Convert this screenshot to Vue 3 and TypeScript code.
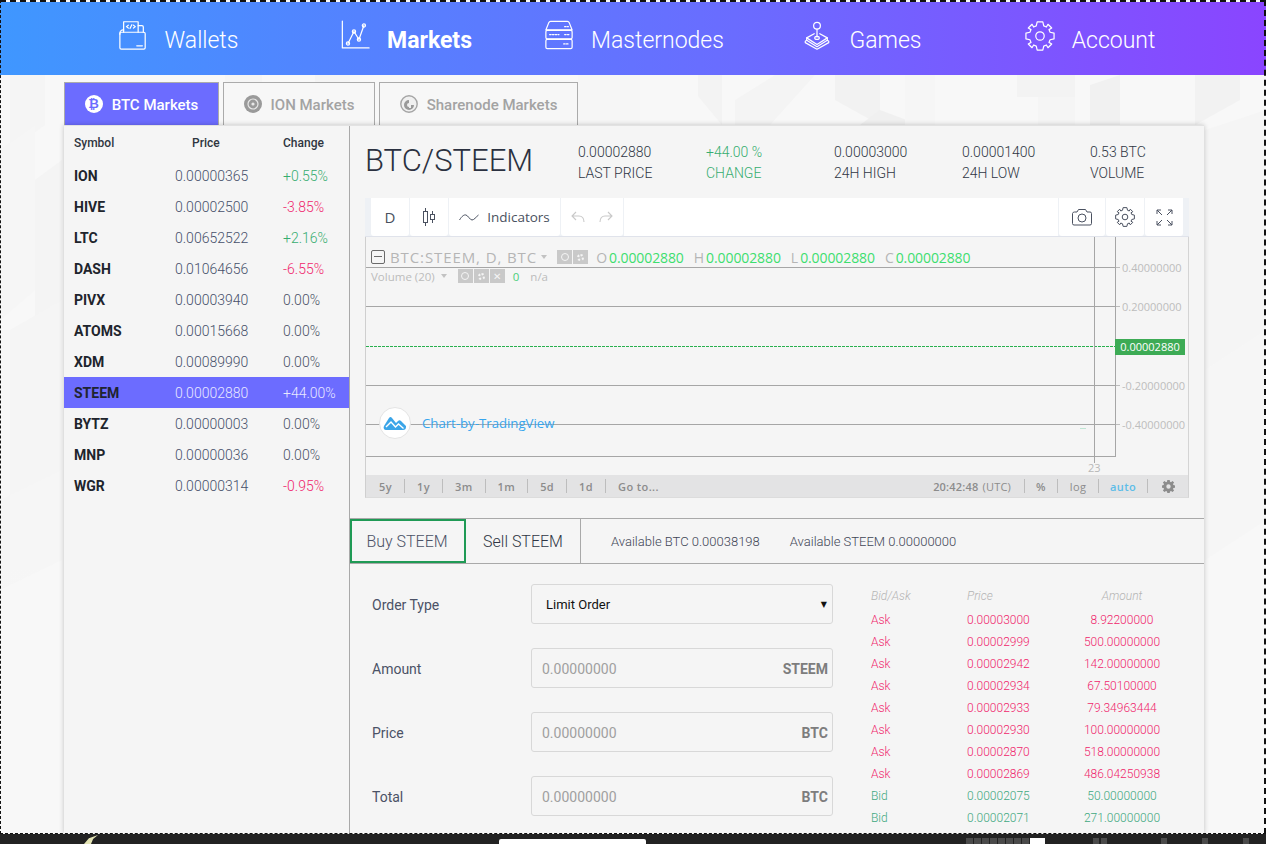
<template>
  <div class="page">
    <svg class="bg-pattern" width="1266" height="844" viewBox="0 0 1266 844">
      <polygon v-for="(p, i) in bgShapes" :key="i" :points="p.points" :fill="p.fill" />
      <rect x="0" y="560" width="1266" height="284" fill="url(#fade)" />
      <defs>
        <linearGradient id="fade" x1="0" y1="0" x2="0" y2="1">
          <stop offset="0" stop-color="#f8f8f8" stop-opacity="0" />
          <stop offset="0.65" stop-color="#f8f8f8" stop-opacity="1" />
        </linearGradient>
      </defs>
    </svg>

    <!-- top navigation -->
    <nav class="topnav">
      <div class="nav-inner">
        <a v-for="item in navItems" :key="item.label" class="nav-item" :class="{ active: item.active }">
          <svg class="nav-icon" viewBox="0 0 32 32" fill="none" stroke="#fff" stroke-width="1.3" stroke-linejoin="round" stroke-linecap="round">
            <g v-if="item.icon === 'wallet'">
              <path d="M6 12V.8h15.5V12" />
              <path d="M21.5 5h4a1.5 1.5 0 0 1 1.5 1.5V12" />
              <path d="M2 14v-1a3.5 3.5 0 0 1 3.5-3.5H6" />
              <path d="M11 4.5L9 6l2 1.5M16.5 4.5L18.5 6l-2 1.5M12.8 8l2-4" />
              <rect x="2" y="12" width="27" height="18" rx="1.5" />
              <path d="M20 26.5h6" />
            </g>
            <g v-else-if="item.icon === 'chart'">
              <path d="M2.5 0v28.7H31" />
              <path d="M8.5 24l6.4-12.8 5.3 8.5 5.3-14.9" />
              <circle cx="8.5" cy="24" r="1.7" />
              <circle cx="14.9" cy="11.2" r="1.7" />
              <circle cx="20.2" cy="19.7" r="1.7" />
              <circle cx="25.5" cy="4.8" r="1.7" />
            </g>
            <g v-else-if="item.icon === 'server'">
              <path d="M7 .5h18c1 0 1.5.5 2 1.5l3 7.5H2l3-7.5c.5-1 1-1.5 2-1.500z" />
              <rect x="2" y="10" width="28" height="9" rx="1.5" />
              <rect x="2" y="19.5" width="28" height="10" rx="1.5" />
              <path d="M6 14.5h10M22 14.5h5M21 24.5h6M22 6h4" stroke-dasharray="1.6 1.4" />
            </g>
            <g v-else-if="item.icon === 'joystick'">
              <circle cx="16" cy="5" r="3.6" />
              <path d="M16 8.6V17" />
              <ellipse cx="16" cy="18" rx="2.4" ry="1.6" />
              <path d="M13 13.5L5 18l11 7 11-7-8-4.5" />
              <path d="M5 18v2.5l11 7 11-7V18" />
              <path d="M5 20.5l-1.5 1v1.6l12.5 7 12.5-7v-1.6l-1.5-1" />
            </g>
            <g v-else>
              <circle cx="16" cy="16" r="4.5" />
              <path d="M13 1H19L20 5.2 22.8 6.4 24.5 3.5 28.5 7.5 25.6 9.2 26.8 12 31 13V19L26.8 20 25.6 22.8 28.5 24.5 24.5 28.5 22.8 25.6 20 26.8 19 31H13L12 26.8 9.2 25.6 7.5 28.5 3.5 24.5 6.4 22.8 5.2 20 1 19V13L5.2 12 6.4 9.2 3.5 7.5 7.5 3.5 9.2 6.4 12 5.2z" />
            </g>
          </svg>
          <span class="nav-label">{{ item.label }}</span>
        </a>
      </div>
    </nav>

    <main class="wrap">
      <!-- market tabs -->
      <div class="market-tabs">
        <button class="market-tab active">
          <span class="coin coin-btc">₿</span>
          <span class="tab-label">BTC Markets</span>
        </button>
        <button class="market-tab">
          <svg class="coin-svg" viewBox="0 0 18 18">
            <circle cx="9" cy="9" r="9" fill="#9a9a9a" />
            <circle cx="9" cy="9" r="5" fill="none" stroke="#e8e8e8" stroke-width="1.2" />
            <circle cx="9" cy="9" r="1.6" fill="#e8e8e8" />
          </svg>
          <span class="tab-label">ION Markets</span>
        </button>
        <button class="market-tab">
          <svg class="coin-svg" viewBox="0 0 18 18">
            <circle cx="9" cy="9" r="8.2" fill="#f0f0f0" stroke="#a5a5a5" stroke-width="1.4" />
            <path d="M9 5a5 5 0 1 0 5 5h-3a2 2 0 1 1-2-2z" fill="#9a9a9a" />
            <path d="M9 9v4h2v-4z" fill="#f0f0f0" />
          </svg>
          <span class="tab-label">Sharenode Markets</span>
        </button>
      </div>

      <div class="panel">
        <!-- market list -->
        <aside class="market-list">
          <div class="list-head">
            <span>Symbol</span>
            <span class="head-price">Price</span>
            <span>Change</span>
          </div>
          <div v-for="m in markets" :key="m.symbol" class="list-row" :class="{ selected: m.symbol === 'STEEM' }">
            <span class="sym">{{ m.symbol }}</span>
            <span class="price">{{ m.price }}</span>
            <span :class="changeClass(m.change)">{{ m.change }}</span>
          </div>
        </aside>

        <section class="detail">
          <header class="pair-head">
            <h1 class="pair">BTC/STEEM</h1>
            <div class="stats">
              <div v-for="s in stats" :key="s.label" class="stat" :class="{ up: s.up }">
                <div>{{ s.value }}</div>
                <div>{{ s.label }}</div>
              </div>
            </div>
          </header>

          <!-- chart widget -->
          <div class="chart">
            <div class="tv-toolbar">
              <div class="tv-cell tv-d">D</div>
              <div class="tv-cell tv-candle">
                <svg width="16" height="20" viewBox="0 0 16 20" fill="none" stroke="#4a5160">
                  <path d="M4.5 1v18M11.5 4v12" />
                  <rect x="2.5" y="4.5" width="4" height="11" fill="#fff" />
                  <rect x="9.5" y="7.5" width="4" height="5" fill="#fff" />
                </svg>
              </div>
              <div class="tv-cell tv-ind">
                <svg width="20" height="10" viewBox="0 0 20 10" fill="none" stroke="#4a5160">
                  <path d="M.5 8C3 4 5 2.5 7 3s4 5 6 5 4-3 6.5-5" />
                </svg>
                Indicators
              </div>
              <div class="tv-cell tv-undo">
                <svg width="14" height="12" viewBox="0 0 14 12" fill="none" stroke="#c9c9c9" stroke-width="1.1">
                  <path d="M5 1L1 5l4 4M1 5h7c3 0 5 2 5 6" />
                </svg>
                <svg width="14" height="12" viewBox="0 0 14 12" fill="none" stroke="#c9c9c9" stroke-width="1.1">
                  <path d="M9 1l4 4-4 4M13 5H6c-3 0-5 2-5 6" />
                </svg>
              </div>
              <div class="tv-fill"></div>
              <div class="tv-cell tv-cam">
                <svg width="22" height="18" viewBox="0 0 22 18" fill="none" stroke="#4a5160">
                  <path d="M1.5 5.5a2 2 0 0 1 2-1.5H6l1.5-2.5h7L16 4h3a1.5 1.5 0 0 1 1.5 1.5v10a1.5 1.5 0 0 1-1.5 1.5H3a1.5 1.5 0 0 1-1.5-1.5z" />
                  <circle cx="11" cy="10" r="4" />
                </svg>
              </div>
              <div class="tv-cell tv-gear">
                <svg width="20" height="20" viewBox="0 0 32 32" fill="none" stroke="#4a5160" stroke-width="1.6" stroke-linejoin="round">
                  <circle cx="16" cy="16" r="4.5" />
                  <path d="M13 1H19L20 5.2 22.8 6.4 24.5 3.5 28.5 7.5 25.6 9.2 26.8 12 31 13V19L26.8 20 25.6 22.8 28.5 24.5 24.5 28.5 22.8 25.6 20 26.8 19 31H13L12 26.8 9.2 25.6 7.5 28.5 3.5 24.5 6.4 22.8 5.2 20 1 19V13L5.2 12 6.4 9.2 3.5 7.5 7.5 3.5 9.2 6.4 12 5.2z" />
                </svg>
              </div>
              <div class="tv-cell tv-full">
                <svg width="17" height="17" viewBox="0 0 17 17" fill="none" stroke="#4a5160">
                  <path d="M1 5V1h4M1 1l5 5M12 1h4v4M16 1l-5 5M1 12v4h4M1 16l5-5M16 12v4h-4M16 16l-5-5" />
                </svg>
              </div>
            </div>

            <div class="tv-canvas">
              <svg class="tv-lines" width="823" height="239" viewBox="0 0 823 239">
                <path d="M1 31.5h749M1 70.5h749M1 149.5h749M1 188.5h749M1 220.5h749" stroke="#a6a6a6" fill="none" />
                <path d="M1 110.5h749" stroke="#28b04e" stroke-dasharray="3 1" fill="none" />
                <path d="M729.5 1v226M750.5 1v220" stroke="#a6a6a6" fill="none" />
                <path d="M751 31.5h4M751 70.5h4M751 110.5h4M751 149.5h4M751 188.5h4" stroke="#bdbdbd" fill="none" />
                <path d="M715 192.5h6" stroke="#bfe5d3" fill="none" />
              </svg>

              <div class="legend legend-main">
                <span class="collapse-box"></span>
                <span class="legend-title">BTC:STEEM, D, BTC</span>
                <span class="caret"></span>
                <span class="legend-btns">
                  <span class="legend-btn"><i class="eye"></i></span>
                  <span class="legend-btn"><i class="cog"></i></span>
                </span>
                <span class="ohlc first"><b>O</b><em>0.00002880</em></span>
                <span class="ohlc"><b>H</b><em>0.00002880</em></span>
                <span class="ohlc"><b>L</b><em>0.00002880</em></span>
                <span class="ohlc"><b>C</b><em>0.00002880</em></span>
              </div>
              <div class="legend legend-vol">
                <span>Volume (20)</span>
                <span class="caret small"></span>
                <span class="legend-btns">
                  <span class="legend-btn sm"><i class="eye"></i></span>
                  <span class="legend-btn sm"><i class="cog"></i></span>
                  <span class="legend-btn sm close">✕</span>
                </span>
                <span class="vol-zero">0</span>
                <span>n/a</span>
              </div>

              <span v-for="t in axisTicks" :key="t.text" class="axis-tick" :style="{ top: t.top + 'px' }">{{ t.text }}</span>
              <span class="price-tag">0.00002880</span>
              <span class="date-tick">23</span>

              <div class="tv-logo">
                <span class="tv-logo-circle">
                  <svg width="24" height="15" viewBox="0 0 24 15">
                    <path d="M1 10l5-8c1-1.3 2-1.3 3 0l4 5 2-2c1-1 2-1 3 0l5 5v1c0 2-1 3-3 3H3c-2 0-3-2-2-4z" fill="#3ba5e8" />
                    <path d="M3 11l5-5 4.5 5 3-3 5 4.5" fill="none" stroke="#fff" stroke-width="1.4" />
                  </svg>
                </span>
                <span class="tv-logo-text">Chart-by-TradingView</span>
              </div>
            </div>

            <div class="tv-timebar">
              <span v-for="r in ranges" :key="r" class="tb-item">{{ r }}</span>
              <span class="tb-item tb-last">Go to...</span>
              <span class="tb-fill"></span>
              <span class="tb-item tb-clock">20:42:48 <small>(UTC)</small></span>
              <span class="tb-item tb-pct">%</span>
              <span class="tb-item tb-log">log</span>
              <span class="tb-item tb-auto">auto</span>
              <span class="tb-gear">
                <svg width="13" height="13" viewBox="0 0 13 13">
                  <path fill="#8c8c8c" fill-rule="evenodd" d="M5.3 0h2.4l.3 1.8 1 .4L10.5 1l1.6 1.6L11 4.1l.4 1 1.6.3v2.3l-1.6.3-.4 1L12.1 10.5l-1.6 1.6L9 11l-1 .4-.3 1.6H5.3L5 11.4 4 11l-1.5 1.1L.9 10.5 2 9l-.4-1L0 7.7V5.4l1.6-.3.4-1L.9 2.6 2.5 1 4 2.2l1-.4zM6.5 4.3a2.2 2.2 0 1 0 0 4.4 2.2 2.2 0 0 0 0-4.4z" />
                </svg>
              </span>
            </div>
          </div>

          <!-- buy / sell tabs -->
          <div class="trade-tabs">
            <button class="trade-tab buy">Buy STEEM</button>
            <button class="trade-tab sell">Sell STEEM</button>
            <div class="avail">
              <span>Available BTC 0.00038198</span>
              <span>Available STEEM 0.00000000</span>
            </div>
          </div>

          <div class="trade-body">
            <form class="order-form" @submit.prevent>
              <label class="form-row">
                <span class="form-label">Order Type</span>
                <div class="field select-field">
                  <span class="select-value">Limit Order</span>
                  <span class="select-arrow">▼</span>
                </div>
              </label>
              <label v-for="f in fields" :key="f.label" class="form-row">
                <span class="form-label">{{ f.label }}</span>
                <div class="field input-field">
                  <input type="text" placeholder="0.00000000" />
                  <b>{{ f.unit }}</b>
                </div>
              </label>
            </form>

            <div class="book">
              <div class="book-head">
                <span>Bid/Ask</span>
                <span>Price</span>
                <span class="amt">Amount</span>
              </div>
              <div v-for="o in orders" :key="o.price" class="book-row" :class="o.side === 'Ask' ? 'ask' : 'bid'">
                <span>{{ o.side }}</span>
                <span>{{ o.price }}</span>
                <span class="amt">{{ o.amount }}</span>
              </div>
            </div>
          </div>
        </section>
      </div>
    </main>

    <!-- window strip at the bottom of the capture -->
    <footer class="capture-strip">
      <span class="moon"></span>
      <span class="strip-tab"></span>
      <span class="strip-blocks">
        <i v-for="n in 8" :key="n"></i>
      </span>
      <span class="strip-white"></span>
      <i v-for="x in stripMarks" :key="x" class="strip-mark" :style="{ left: x + 'px' }"></i>
    </footer>

    <div class="capture-frame"></div>
  </div>
</template>

<script setup lang="ts">
interface Market {
  symbol: string
  price: string
  change: string
}

const navItems = [
  { label: 'Wallets', icon: 'wallet', active: false },
  { label: 'Markets', icon: 'chart', active: true },
  { label: 'Masternodes', icon: 'server', active: false },
  { label: 'Games', icon: 'joystick', active: false },
  { label: 'Account', icon: 'gear', active: false }
]

const markets: Market[] = [
  { symbol: 'ION', price: '0.00000365', change: '+0.55%' },
  { symbol: 'HIVE', price: '0.00002500', change: '-3.85%' },
  { symbol: 'LTC', price: '0.00652522', change: '+2.16%' },
  { symbol: 'DASH', price: '0.01064656', change: '-6.55%' },
  { symbol: 'PIVX', price: '0.00003940', change: '0.00%' },
  { symbol: 'ATOMS', price: '0.00015668', change: '0.00%' },
  { symbol: 'XDM', price: '0.00089990', change: '0.00%' },
  { symbol: 'STEEM', price: '0.00002880', change: '+44.00%' },
  { symbol: 'BYTZ', price: '0.00000003', change: '0.00%' },
  { symbol: 'MNP', price: '0.00000036', change: '0.00%' },
  { symbol: 'WGR', price: '0.00000314', change: '-0.95%' }
]

const stats = [
  { value: '0.00002880', label: 'LAST PRICE', up: false },
  { value: '+44.00 %', label: 'CHANGE', up: true },
  { value: '0.00003000', label: '24H HIGH', up: false },
  { value: '0.00001400', label: '24H LOW', up: false },
  { value: '0.53 BTC', label: 'VOLUME', up: false }
]

const axisTicks = [
  { text: '0.40000000', top: 23 },
  { text: '0.20000000', top: 62 },
  { text: '-0.20000000', top: 141 },
  { text: '-0.40000000', top: 180 }
]

const ranges = ['5y', '1y', '3m', '1m', '5d', '1d']

const fields = [
  { label: 'Amount', unit: 'STEEM' },
  { label: 'Price', unit: 'BTC' },
  { label: 'Total', unit: 'BTC' }
]

const orders = [
  { side: 'Ask', price: '0.00003000', amount: '8.92200000' },
  { side: 'Ask', price: '0.00002999', amount: '500.00000000' },
  { side: 'Ask', price: '0.00002942', amount: '142.00000000' },
  { side: 'Ask', price: '0.00002934', amount: '67.50100000' },
  { side: 'Ask', price: '0.00002933', amount: '79.34963444' },
  { side: 'Ask', price: '0.00002930', amount: '100.00000000' },
  { side: 'Ask', price: '0.00002870', amount: '518.00000000' },
  { side: 'Ask', price: '0.00002869', amount: '486.04250938' },
  { side: 'Bid', price: '0.00002075', amount: '50.00000000' },
  { side: 'Bid', price: '0.00002071', amount: '271.00000000' }
]

const stripMarks = [1093, 1101, 1161, 1202, 1243]

const changeClass = (change: string) => {
  if (change.startsWith('+')) return 'chg up'
  if (change.startsWith('-')) return 'chg down'
  return 'chg'
}

// low contrast polygons behind the page, laid out by hand
const bgShapes = [
  { points: '10,75 45,75 45,125 10,150', fill: '#f5f5f5' },
  { points: '0,150 35,125 35,290 0,320', fill: '#f6f6f6' },
  { points: '35,180 62,160 62,300 35,330', fill: '#f4f4f4' },
  { points: '10,330 62,300 62,470 10,500', fill: '#f5f5f5' },
  { points: '0,500 62,470 62,560 0,590', fill: '#f6f6f6' },
  { points: '225,75 262,75 262,82 225,82', fill: '#f5f5f5' },
  { points: '315,75 350,75 350,82 315,82', fill: '#f4f4f4' },
  { points: '578,75 640,75 640,125 578,125', fill: '#f6f6f6' },
  { points: '698,75 722,75 722,125 698,96', fill: '#f3f3f3' },
  { points: '735,100 775,75 815,75 770,125 735,125', fill: '#f4f4f4' },
  { points: '835,75 880,75 880,125 835,100', fill: '#f2f2f2' },
  { points: '880,110 920,125 860,125', fill: '#f0f0f0' },
  { points: '905,75 935,75 935,125 905,125', fill: '#f6f6f6' },
  { points: '1017,75 1075,75 1075,97 1017,97', fill: '#f3f3f3' },
  { points: '1038,97 1075,97 1075,125 1038,125', fill: '#f5f5f5' },
  { points: '1090,85 1120,75 1120,125 1090,125', fill: '#f1f1f1' },
  { points: '1195,75 1240,75 1240,100 1195,125', fill: '#f2f2f2' },
  { points: '1205,130 1266,110 1266,330 1205,370', fill: '#f5f5f5' },
  { points: '1205,370 1266,330 1266,520 1205,560', fill: '#f6f6f6' }
]
</script>

<style>
body {
  background: #f8f8f8;
}
</style>

<style scoped>
.page {
  position: relative;
  width: 1266px;
  height: 844px;
  overflow: hidden;
  background: #f8f8f8;
  font-family: Roboto, "Liberation Sans", sans-serif;
  color: #3f4656;
  display: flex;
  flex-direction: column;
}

.bg-pattern {
  position: absolute;
  left: 0;
  top: 0;
}

.topnav {
  position: relative;
  flex: none;
  height: 73px;
  margin-top: 2px;
  background: linear-gradient(90deg, #3f97ff 0%, #6a6cff 58%, #8a45ff 100%);
}

.nav-inner {
  width: 1140px;
  margin-left: 64px;
  height: 100%;
  display: grid;
  grid-template-columns: repeat(5, 228px);
}

.nav-item {
  display: flex;
  align-items: center;
  justify-content: center;
  gap: 17px;
  color: #fff;
  font-size: 23px;
  font-weight: 300;
}

.nav-item.active {
  font-weight: 700;
}

.nav-label {
  padding-top: 4px;
}

.nav-icon {
  width: 30px;
  height: 30px;
  margin-top: -6px;
  overflow: visible;
}

.wrap {
  position: relative;
  flex: 1;
  width: 1140px;
  margin-left: 64px;
  min-height: 0;
  display: flex;
  flex-direction: column;
}

.market-tabs {
  flex: none;
  display: flex;
  gap: 4px;
  padding-top: 7px;
  height: 50px;
  box-sizing: border-box;
}

.market-tab {
  display: flex;
  align-items: center;
  justify-content: center;
  gap: 9px;
  height: 43px;
  padding: 0;
  border: 1px solid #ababab;
  border-bottom: none;
  background: #f7f7f7;
  color: #a3a3a3;
  font: 500 15px Roboto, "Liberation Sans", sans-serif;
}

.tab-label {
  padding-top: 1px;
}

.market-tab:nth-child(1) {
  width: 155px;
}

.market-tab:nth-child(2) {
  width: 152px;
}

.market-tab:nth-child(3) {
  width: 199px;
}

.market-tab.active {
  background: #6c6cff;
  color: #fff;
}

.coin {
  width: 18px;
  height: 18px;
  border-radius: 50%;
  background: #fff;
  color: #6c6cff;
  font: 700 13px/18px "DejaVu Sans", sans-serif;
  text-align: center;
}

.coin-svg {
  width: 18px;
  height: 18px;
}

.panel {
  flex: 1;
  min-height: 0;
  display: flex;
  background: #f5f5f5;
  border-top: 1px solid #e2e2e2;
  box-shadow: 0 0 5px rgba(0, 0, 0, 0.22);
}

.market-list {
  flex: none;
  width: 286px;
  box-sizing: border-box;
  border-right: 1px solid #a9a9a9;
}

.list-head,
.list-row {
  display: grid;
  grid-template-columns: 101px 108px 1fr;
  padding-left: 10px;
  align-items: center;
}

.list-head {
  height: 34px;
  font-size: 12px;
  font-weight: 500;
  color: #2f3540;
}

.head-price {
  padding-left: 17px;
}

.list-row {
  height: 31px;
  font-size: 14px;
  font-weight: 300;
}

.sym {
  font-weight: 700;
  color: #20242c;
}

.price {
  color: #46506a;
}

.chg {
  color: #4b5266;
}

.chg.up {
  color: #35ad70;
}

.chg.down {
  color: #f01f6c;
}

.list-row.selected {
  background: #6c6cff;
}

.list-row.selected span {
  color: #e8e8ff;
}

.list-row.selected .sym {
  color: #1f2430;
}

.detail {
  flex: 1;
  min-width: 0;
  display: flex;
  flex-direction: column;
}

.pair-head {
  flex: none;
  height: 72px;
  display: flex;
  align-items: center;
  padding-left: 15px;
}

.pair {
  margin: -4px 0 0;
  width: 213px;
  font-size: 31px;
  font-weight: 300;
  color: #2b3140;
  flex: none;
}

.stats {
  display: grid;
  grid-template-columns: repeat(5, 128px);
  margin-top: 2px;
}

.stat {
  font-size: 14px;
  font-weight: 300;
  line-height: 21px;
  color: #2f3644;
}

.stat.up {
  color: #35ad70;
}

.chart {
  flex: none;
  width: 824px;
  margin-left: 15px;
  font-family: "Open Sans", "Liberation Sans", sans-serif;
}

.tv-toolbar {
  display: flex;
  height: 38px;
  gap: 1px;
  padding: 0 6px;
  background: #eef1f5;
  border-bottom: 1px solid #e0e3eb;
  box-sizing: content-box;
}

.tv-cell {
  display: flex;
  align-items: center;
  justify-content: center;
  background: #fff;
  color: #4a5160;
  font-size: 13.5px;
  border-radius: 0 0 3px 3px;
}

.tv-d {
  width: 38px;
  font-size: 15px;
  font-weight: 500;
}

.tv-candle {
  width: 38px;
}

.tv-ind {
  width: 111px;
  gap: 8px;
}

.tv-undo {
  width: 62px;
  gap: 14px;
}

.tv-fill {
  flex: 1;
  background: #fff;
}

.tv-cam {
  width: 46px;
}

.tv-gear {
  width: 38px;
}

.tv-full {
  width: 38px;
}

.tv-canvas {
  position: relative;
  height: 238px;
  background: #f5f5f5;
  border-left: 1px solid #cfcfcf;
  border-right: 1px solid #d4d4d4;
}

.tv-lines {
  position: absolute;
  left: -1px;
  top: -1px;
}

.legend {
  position: absolute;
  left: 5px;
  display: flex;
  align-items: center;
  color: #b5b5b5;
}

.legend-main {
  top: 10px;
  height: 20px;
  font-size: 14px;
}

.collapse-box {
  position: relative;
  width: 12px;
  height: 12px;
  border: 1px solid #6a6a6a;
  border-radius: 2px;
  margin-right: 5px;
}

.collapse-box::after {
  content: "";
  position: absolute;
  left: 2px;
  right: 2px;
  top: 5px;
  height: 1px;
  background: #6a6a6a;
}

.legend-title {
  font-size: 15px;
  letter-spacing: 0.9px;
  white-space: nowrap;
}

.caret {
  width: 0;
  height: 0;
  margin: 0 10px 0 4px;
  border-left: 3.5px solid transparent;
  border-right: 3.5px solid transparent;
  border-top: 4px solid #c2c2c2;
}

.caret.small {
  margin: 0 11px 0 6px;
}

.legend-btns {
  display: flex;
  gap: 1px;
}

.legend-btn {
  position: relative;
  display: flex;
  align-items: center;
  justify-content: center;
  width: 15px;
  height: 14px;
  background: #c9c9c9;
  color: #f5f5f5;
}

.legend-btn.sm {
  font-size: 10px;
}

.eye {
  width: 8px;
  height: 8px;
  border: 1.5px solid #f5f5f5;
  border-radius: 50%;
  box-sizing: border-box;
}

.cog {
  width: 7px;
  height: 7px;
  border: 2px dotted #f5f5f5;
  border-radius: 50%;
  box-sizing: border-box;
}

.ohlc {
  display: flex;
  gap: 2px;
  margin-right: 10px;
  white-space: nowrap;
}

.ohlc.first {
  margin-left: 8px;
}

.ohlc b {
  font-weight: 400;
  color: #b5b5b5;
}

.ohlc em {
  font-style: normal;
  color: #3dde6f;
  letter-spacing: -0.1px;
}

.legend-vol {
  top: 31px;
  height: 16px;
  font-size: 11.5px;
  color: #bcbcbc;
}

.legend-vol .legend-btns {
  margin-right: 8px;
}

.vol-zero {
  color: #4ccf7a;
  margin-right: 11px;
}

.axis-tick {
  position: absolute;
  left: 756px;
  font-size: 11px;
  line-height: 15px;
  color: #bdbdbd;
  white-space: nowrap;
}

.price-tag {
  position: absolute;
  left: 749px;
  top: 102px;
  width: 70px;
  height: 16px;
  background: #3dab55;
  color: #fff;
  font-size: 11px;
  line-height: 16px;
  text-align: center;
}

.date-tick {
  position: absolute;
  left: 722px;
  top: 223px;
  font-size: 11px;
  color: #b8b8b8;
}

.tv-logo {
  position: absolute;
  left: 13px;
  top: 170px;
  display: flex;
  align-items: center;
  gap: 11px;
}

.tv-logo-circle {
  display: flex;
  align-items: center;
  justify-content: center;
  width: 32px;
  height: 32px;
  box-sizing: border-box;
  background: #fff;
  border: 1px solid #e4e4e4;
  border-radius: 50%;
}

.tv-logo-text {
  font-size: 13.2px;
  color: #36a5ee;
  white-space: nowrap;
  font-family: "Open Sans", sans-serif;
}

.tv-timebar {
  display: flex;
  align-items: center;
  height: 23px;
  background: #e3e3e4;
  border-left: 1px solid #cfcfcf;
  border-right: 1px solid #d4d4d4;
  border-bottom: 1px solid #dcdcdc;
  box-sizing: border-box;
  font-size: 11px;
  font-weight: 600;
  color: #8c8c8c;
  letter-spacing: 0.4px;
}

.tb-item {
  display: flex;
  align-items: center;
  height: 14px;
  padding: 0 12px;
  border-right: 1px solid #bdbdbd;
  white-space: nowrap;
}

.tb-item:first-child {
  padding-left: 13px;
  padding-right: 12px;
}

.tb-last {
  border-right: none;
}

.tb-fill {
  flex: 1;
}

.tb-clock {
  padding: 0 13px 0 0;
  letter-spacing: 0.2px;
}

.tb-clock small {
  font-size: 11px;
  font-weight: 400;
  margin-left: 4px;
}

.tb-pct,
.tb-log,
.tb-auto {
  justify-content: center;
  padding: 0;
}

.tb-pct {
  width: 32px;
}

.tb-log {
  width: 40px;
  font-weight: 400;
}

.tb-auto {
  width: 48px;
  color: #5dbde8;
  font-weight: 600;
}

.tb-gear {
  display: flex;
  padding: 0 13px 0 14px;
}

.trade-tabs {
  flex: none;
  display: flex;
  height: 44px;
  margin-top: 20px;
  border-top: 1px solid #a9a9a9;
  border-bottom: 1px solid #a9a9a9;
  box-sizing: content-box;
}

.trade-tab {
  background: transparent;
  border: none;
  padding: 0;
  font: 300 16px Roboto, "Liberation Sans", sans-serif;
  color: #2f3644;
}

.trade-tab.buy {
  width: 116px;
  border: 2px solid #1f9a55;
  padding-right: 2px;
  color: #4b5266;
}

.trade-tab.sell {
  width: 115px;
  border-right: 1px solid #a9a9a9;
}

.avail {
  display: flex;
  align-items: center;
  gap: 30px;
  padding-left: 30px;
  font-size: 13px;
  font-weight: 300;
  color: #3f4656;
}

.trade-body {
  flex: 1;
  display: flex;
  min-height: 0;
}

.order-form {
  flex: none;
  width: 483px;
  padding: 20px 0 0 22px;
  box-sizing: border-box;
  display: flex;
  flex-direction: column;
  gap: 24px;
}

.form-row {
  display: grid;
  grid-template-columns: 159px 302px;
  align-items: center;
  font-size: 14px;
  color: #4b5266;
}

.form-label {
  padding-top: 2px;
}

.field {
  display: flex;
  align-items: center;
  height: 40px;
  box-sizing: border-box;
  border: 1px solid #d8d8d8;
  border-radius: 3px;
  background: #f5f5f5;
  padding: 0 4px 0 10px;
}

.input-field {
  padding-top: 2px;
}

.field input {
  flex: 1;
  min-width: 0;
  padding: 0;
  border: none;
  outline: none;
  background: transparent;
  font: 400 14px Roboto, "Liberation Sans", sans-serif;
}

.field input::placeholder {
  color: #a0a0a0;
  opacity: 1;
}

.field b {
  font-size: 14px;
  font-weight: 700;
  color: #7d7d7d;
}

.select-field {
  justify-content: space-between;
  padding-left: 14px;
}

.select-value {
  font-size: 13px;
  font-weight: 400;
  color: #111;
}

.select-arrow {
  font-size: 8px;
  color: #111;
  font-family: "DejaVu Sans", sans-serif;
  margin-right: 1px;
}

.book {
  flex: none;
  width: 310px;
  padding-top: 25px;
  margin-left: 38px;
  font-size: 12px;
  font-weight: 300;
}

.book-head,
.book-row {
  display: grid;
  grid-template-columns: 96px 99px 112px;
  height: 22px;
  align-items: center;
}

.book-head {
  color: #b4b4b4;
  font-style: italic;
  font-size: 12px;
  margin-bottom: 2px;
  margin-top: -4px;
}

.amt {
  text-align: center;
}

.book-row.ask {
  color: #f01f6c;
}

.book-row.bid {
  color: #3fa87f;
}

.capture-strip {
  position: relative;
  flex: none;
  height: 10px;
  background: #222;
}

.moon {
  position: absolute;
  left: 84px;
  top: 1px;
  width: 14px;
  height: 9px;
  background: #e3e3b4;
  clip-path: polygon(100% 0, 65% 45%, 50% 100%, 0 100%, 35% 35%);
}

.strip-tab {
  position: absolute;
  left: 499px;
  top: 5px;
  width: 147px;
  height: 5px;
  background: #fff;
  border-radius: 2px 2px 0 0;
}

.strip-blocks {
  position: absolute;
  left: 966px;
  top: 4px;
  display: flex;
  gap: 1px;
}

.strip-blocks i {
  width: 7px;
  height: 6px;
  background: #4a4a4a;
}

.strip-white {
  position: absolute;
  left: 1030px;
  top: 4px;
  width: 15px;
  height: 6px;
  background: #fff;
}

.strip-mark {
  position: absolute;
  top: 4px;
  width: 6px;
  height: 6px;
  background: #4a4a4a;
}

.capture-frame {
  position: absolute;
  inset: 0 0 10px 0;
  border: 1px dashed #111;
  border-top-width: 2px;
  border-right-width: 2px;
  pointer-events: none;
}
</style>
